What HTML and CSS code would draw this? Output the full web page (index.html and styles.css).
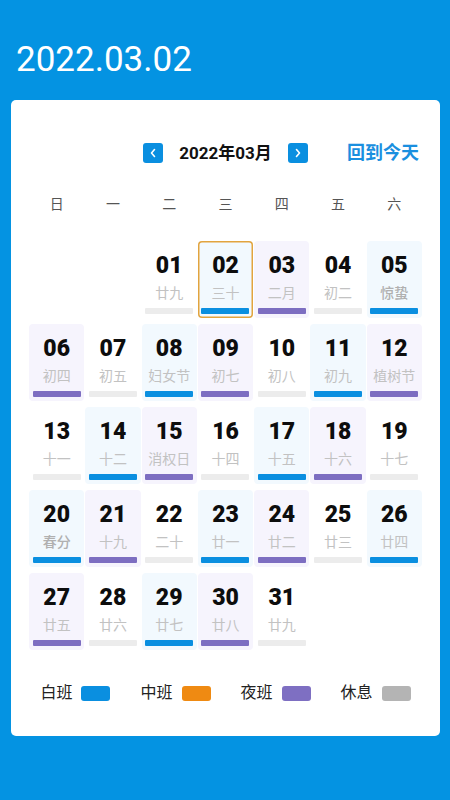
FILE: index.html
```html
<!DOCTYPE html>
<html lang="zh">
<head>
<meta charset="utf-8">
<title>排班日历</title>
<link rel="stylesheet" href="styles.css">
</head>
<body>
<header class="top">
  <h1 class="title">2022.03.02</h1>
</header>
<main class="card">
  <div class="nav">
    <div class="nav-group">
      <button class="arrow" aria-label="上个月">
        <svg width="8" height="10" viewBox="0 0 8 10"><path d="M5.5 1.5 L2.5 5 L5.5 8.5" fill="none" stroke="#fff" stroke-width="1.6" stroke-linecap="round" stroke-linejoin="round"/></svg>
      </button>
      <span class="month">2022年03月</span>
      <button class="arrow" aria-label="下个月">
        <svg width="8" height="10" viewBox="0 0 8 10"><path d="M2.5 1.5 L5.5 5 L2.5 8.5" fill="none" stroke="#fff" stroke-width="1.6" stroke-linecap="round" stroke-linejoin="round"/></svg>
      </button>
    </div>
    <a class="today">回到今天</a>
  </div>
  <div class="weekdays">
    <span>日</span><span>一</span><span>二</span><span>三</span><span>四</span><span>五</span><span>六</span>
  </div>
  <div class="grid">
    <div class="cell empty"></div>
    <div class="cell empty"></div>
    <div class="cell rest"><span class="num">01</span><span class="lunar">廿九</span><span class="bar"></span></div>
    <div class="cell day selected"><span class="num">02</span><span class="lunar">三十</span><span class="bar"></span></div>
    <div class="cell night"><span class="num">03</span><span class="lunar">二月</span><span class="bar"></span></div>
    <div class="cell rest"><span class="num">04</span><span class="lunar">初二</span><span class="bar"></span></div>
    <div class="cell day"><span class="num">05</span><span class="lunar term">惊蛰</span><span class="bar"></span></div>

    <div class="cell night"><span class="num">06</span><span class="lunar">初四</span><span class="bar"></span></div>
    <div class="cell rest"><span class="num">07</span><span class="lunar">初五</span><span class="bar"></span></div>
    <div class="cell day"><span class="num">08</span><span class="lunar">妇女节</span><span class="bar"></span></div>
    <div class="cell night"><span class="num">09</span><span class="lunar">初七</span><span class="bar"></span></div>
    <div class="cell rest"><span class="num">10</span><span class="lunar">初八</span><span class="bar"></span></div>
    <div class="cell day"><span class="num">11</span><span class="lunar">初九</span><span class="bar"></span></div>
    <div class="cell night"><span class="num">12</span><span class="lunar">植树节</span><span class="bar"></span></div>

    <div class="cell rest"><span class="num">13</span><span class="lunar">十一</span><span class="bar"></span></div>
    <div class="cell day"><span class="num">14</span><span class="lunar">十二</span><span class="bar"></span></div>
    <div class="cell night"><span class="num">15</span><span class="lunar">消权日</span><span class="bar"></span></div>
    <div class="cell rest"><span class="num">16</span><span class="lunar">十四</span><span class="bar"></span></div>
    <div class="cell day"><span class="num">17</span><span class="lunar">十五</span><span class="bar"></span></div>
    <div class="cell night"><span class="num">18</span><span class="lunar">十六</span><span class="bar"></span></div>
    <div class="cell rest"><span class="num">19</span><span class="lunar">十七</span><span class="bar"></span></div>

    <div class="cell day"><span class="num">20</span><span class="lunar term">春分</span><span class="bar"></span></div>
    <div class="cell night"><span class="num">21</span><span class="lunar">十九</span><span class="bar"></span></div>
    <div class="cell rest"><span class="num">22</span><span class="lunar">二十</span><span class="bar"></span></div>
    <div class="cell day"><span class="num">23</span><span class="lunar">廿一</span><span class="bar"></span></div>
    <div class="cell night"><span class="num">24</span><span class="lunar">廿二</span><span class="bar"></span></div>
    <div class="cell rest"><span class="num">25</span><span class="lunar">廿三</span><span class="bar"></span></div>
    <div class="cell day"><span class="num">26</span><span class="lunar">廿四</span><span class="bar"></span></div>

    <div class="cell night"><span class="num">27</span><span class="lunar">廿五</span><span class="bar"></span></div>
    <div class="cell rest"><span class="num">28</span><span class="lunar">廿六</span><span class="bar"></span></div>
    <div class="cell day"><span class="num">29</span><span class="lunar">廿七</span><span class="bar"></span></div>
    <div class="cell night"><span class="num">30</span><span class="lunar">廿八</span><span class="bar"></span></div>
    <div class="cell rest"><span class="num">31</span><span class="lunar">廿九</span><span class="bar"></span></div>
  </div>
  <div class="legend">
    <div class="legend-item"><span>白班</span><span class="swatch sw-day"></span></div>
    <div class="legend-item"><span>中班</span><span class="swatch sw-mid"></span></div>
    <div class="legend-item"><span>夜班</span><span class="swatch sw-night"></span></div>
    <div class="legend-item"><span>休息</span><span class="swatch sw-rest"></span></div>
  </div>
</main>
</body>
</html>
```
FILE: styles.css
```css
* { box-sizing: border-box; }
html, body { margin: 0; padding: 0; }
body {
  background: #0493e2;
  font-family: Roboto, "Noto Sans CJK SC", sans-serif;
  width: 450px;
  height: 800px;
  overflow: hidden;
}
.top {
  padding: 38px 0 0 16px;
}
.title {
  margin: 0;
  color: #fff;
  font-family: Roboto, sans-serif;
  font-weight: 400;
  font-size: 35px;
  line-height: 44px;
}
.card {
  margin: 18px 10px 0 11px;
  background: #fff;
  border-radius: 5px;
  padding: 43px 18px 33px 18px;
}
.nav {
  display: grid;
  grid-template-columns: 1fr auto 1fr;
  align-items: center;
  height: 20px;
}
.nav-group {
  grid-column: 2;
  display: flex;
  align-items: center;
}
.arrow {
  width: 20px;
  height: 20px;
  border: 0;
  padding: 0;
  border-radius: 3px;
  background: #0a8fe0;
  display: flex;
  align-items: center;
  justify-content: center;
}
.month {
  margin: 0 16px;
  font-weight: 700;
  font-size: 17px;
  color: #111;
  line-height: 20px;
}
.today {
  grid-column: 3;
  justify-self: end;
  margin-right: 3px;
  color: #1a8fdf;
  font-weight: 700;
  font-size: 18px;
  line-height: 20px;
}
.weekdays {
  margin-top: 31px;
  display: grid;
  grid-template-columns: repeat(7, 1fr);
  column-gap: 1px;
  text-align: center;
  font-size: 14px;
  line-height: 20px;
  color: #555;
}
.grid {
  margin-top: 27px;
  display: grid;
  grid-template-columns: repeat(7, 1fr);
  grid-auto-rows: 77px;
  column-gap: 1px;
  row-gap: 6px;
}
.cell {
  border-radius: 4px;
  display: flex;
  flex-direction: column;
  align-items: center;
  padding-top: 12px;
}
.cell.day { background: #f2f9fe; }
.cell.night { background: #f6f4fd; }
.cell.selected { box-shadow: inset 0 0 0 1.5px #e2a43e; }
.num {
  font-weight: 900;
  font-size: 23px;
  line-height: 26px;
  color: #0d0d0d;
}
.lunar {
  margin-top: 5px;
  font-size: 14px;
  line-height: 18px;
  color: #c2c2c2;
}
.lunar.term { color: #b0b0b0; font-weight: 500; }
.bar {
  margin-top: 6px;
  width: 48px;
  height: 6px;
  border-radius: 1px;
  background: #ececec;
}
.cell.day .bar { background: #0a8fe0; }
.cell.night .bar { background: #7d6ec1; }
.legend {
  margin-top: 33px;
  display: flex;
  justify-content: center;
  gap: 30px;
  height: 20px;
  align-items: center;
}
.legend-item {
  display: flex;
  align-items: center;
  gap: 9px;
  font-size: 16px;
  color: #222;
  line-height: 20px;
}
.swatch {
  width: 29px;
  height: 15px;
  border-radius: 3px;
}
.sw-day { background: #0a8fe0; }
.sw-mid { background: #ef8a12; }
.sw-night { background: #7e6fc2; }
.sw-rest { background: #b4b4b4; }
```
